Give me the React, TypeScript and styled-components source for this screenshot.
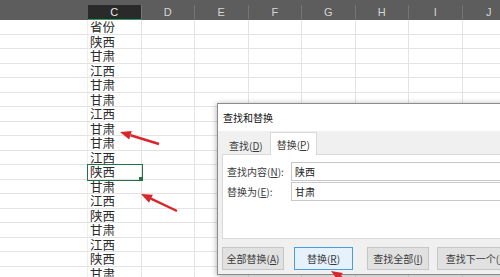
import React from 'react';
import styled, { createGlobalStyle } from 'styled-components';

const GlobalStyle = createGlobalStyle`
  html, body {
    margin: 0;
    padding: 0;
    background: #ffffff;
  }
  * {
    box-sizing: border-box;
  }
`;

const columns = ['', 'C', 'D', 'E', 'F', 'G', 'H', 'I', 'J'];
const provinces = [
  '省份', '陕西', '甘肃', '江西', '甘肃', '甘肃', '江西', '甘肃', '甘肃',
  '江西', '陕西', '甘肃', '江西', '陕西', '甘肃', '江西', '陕西', '甘肃',
];
const selectedRow = 10;

const buttons = [
  { label: '全部替换', key: 'A', width: 62, gap: 0, primary: false },
  { label: '替换', key: 'R', width: 59, gap: 10, primary: true },
  { label: '查找全部', key: 'I', width: 62, gap: 14, primary: false },
  { label: '查找下一个', key: 'F', width: 80, gap: 8, primary: false },
];

const App = () => {
  return (
    <Screen>
      <GlobalStyle />
      <Sheet>
        <HeaderBar>
          {columns.map((c, i) => (
            <HeaderCell key={i} $active={c === 'C'} $first={i === 0}>
              {c}
            </HeaderCell>
          ))}
        </HeaderBar>
        {provinces.map((p, r) => (
          <Row key={r}>
            {columns.map((c, i) => (
              <Cell key={i} $first={i === 0} $selected={c === 'C' && r === selectedRow}>
                {c === 'C' ? p : ''}
              </Cell>
            ))}
          </Row>
        ))}
      </Sheet>

      <Arrows viewBox="0 0 500 277" width="500" height="277">
        <Arrow x1={159} y1={144} x2={120} y2={132} />
        <Arrow x1={177} y1={211} x2={141} y2={194} />
        <Arrow x1={352} y1={284} x2={331} y2={271} />
      </Arrows>

      <Dialog>
        <TitleBar>查找和替换</TitleBar>
        <DialogBody>
          <TabRow>
            <Tab>
              查找(<u>D</u>)
            </Tab>
            <Tab $active>
              替换(<u>P</u>)
            </Tab>
          </TabRow>
          <Panel>
            <FieldRow>
              <FieldLabel>
                查找内容(<u>N</u>):
              </FieldLabel>
              <FieldInput>陕西</FieldInput>
            </FieldRow>
            <FieldRow>
              <FieldLabel>
                替换为(<u>E</u>):
              </FieldLabel>
              <FieldInput>甘肃</FieldInput>
            </FieldRow>
          </Panel>
          <ButtonRow>
            {buttons.map((b) => (
              <DialogButton key={b.key} $width={b.width} $gap={b.gap} $primary={b.primary}>
                {b.label}(<u>{b.key}</u>)
              </DialogButton>
            ))}
          </ButtonRow>
        </DialogBody>
      </Dialog>
    </Screen>
  );
};

const Arrow = ({ x1, y1, x2, y2 }: { x1: number; y1: number; x2: number; y2: number }) => {
  const a = Math.atan2(y2 - y1, x2 - x1);
  const len = 11;
  const half = 4.5;
  const bx = x2 - len * Math.cos(a);
  const by = y2 - len * Math.sin(a);
  const px = -Math.sin(a) * half;
  const py = Math.cos(a) * half;
  return (
    <g>
      <line x1={x1} y1={y1} x2={bx} y2={by} stroke="#d8262b" strokeWidth={2.4} />
      <polygon
        points={`${x2},${y2} ${bx + px},${by + py} ${bx - px},${by - py}`}
        fill="#d8262b"
      />
    </g>
  );
};

export default App;

const Screen = styled.div`
  position: relative;
  width: 500px;
  height: 277px;
  overflow: hidden;
  background: #ffffff;
`;

const Sheet = styled.div`
  display: flex;
  flex-direction: column;
  width: 520px;
`;

const HeaderBar = styled.div`
  display: grid;
  grid-template-columns: 88px repeat(8, 53.5px);
  height: 20px;
  padding-top: 5px;
  background: #5d5d5d;
`;

const HeaderCell = styled.div<{ $active?: boolean; $first?: boolean }>`
  height: 15px;
  line-height: 14px;
  text-align: center;
  font-family: 'Liberation Sans', Arial, sans-serif;
  font-size: 11px;
  color: ${(p) => (p.$active ? '#e8e8e8' : '#d6d6d6')};
  background: ${(p) => (p.$active ? '#2a2a2a' : 'transparent')};
  border-right: 1px solid ${(p) => (p.$first ? 'transparent' : '#767676')};
  border-bottom: ${(p) => (p.$active ? '1px solid #2e9a5d' : '1px solid transparent')};
`;

const Row = styled.div`
  display: grid;
  grid-template-columns: 88px repeat(8, 53.5px);
  height: 14.5px;
`;

const Cell = styled.div<{ $first?: boolean; $selected?: boolean }>`
  position: relative;
  height: 14.5px;
  padding-left: 2px;
  line-height: 14px;
  font-family: 'Noto Sans CJK SC', 'Noto Sans', sans-serif;
  font-size: 12.5px;
  color: #2a2a2a;
  white-space: nowrap;
  border-bottom: 1px solid #e3e3e3;
  border-right: 1px solid ${(p) => (p.$first ? '#eeeeee' : '#e3e3e3')};
  ${(p) =>
    p.$selected &&
    `
    z-index: 1;
    outline: 1.5px solid #217346;
    outline-offset: -0.5px;
    &::after {
      content: '';
      position: absolute;
      right: -2px;
      bottom: -2px;
      width: 4px;
      height: 4px;
      background: #217346;
    }
  `}
`;

const Arrows = styled.svg`
  position: absolute;
  left: 0;
  top: 0;
  z-index: 2;
  pointer-events: none;
`;

const Dialog = styled.div`
  position: absolute;
  left: 217px;
  top: 103px;
  width: 300px;
  height: 172px;
  display: flex;
  flex-direction: column;
  background: #f0f0f0;
  border: 1px solid #8c8c8c;
  box-shadow: 0 1px 6px rgba(0, 0, 0, 0.35);
  font-family: 'Noto Sans CJK SC', 'Noto Sans', sans-serif;
  font-size: 10px;
  color: #1e1e1e;
  z-index: 1;
`;

const TitleBar = styled.div`
  height: 27px;
  line-height: 27px;
  padding-left: 5px;
  background: #ffffff;
  color: #111111;
`;

const DialogBody = styled.div`
  display: flex;
  flex-direction: column;
  flex: 1;
  padding-left: 4px;
`;

const TabRow = styled.div`
  display: flex;
  align-items: flex-end;
  height: 23px;
`;

const Tab = styled.div<{ $active?: boolean }>`
  position: relative;
  height: ${(p) => (p.$active ? '23px' : '20px')};
  line-height: ${(p) => (p.$active ? '23px' : '22px')};
  padding: 0 6px;
  margin-bottom: ${(p) => (p.$active ? '-1px' : '0')};
  background: ${(p) => (p.$active ? '#ffffff' : 'transparent')};
  border: 1px solid ${(p) => (p.$active ? '#d9d9d9' : 'transparent')};
  border-bottom: none;
  z-index: 1;
  color: #3a3a3a;
`;

const Panel = styled.div`
  display: flex;
  flex-direction: column;
  gap: 1px;
  height: 85px;
  padding: 7px 4px;
  background: #ffffff;
  border: 1px solid #d9d9d9;
  border-right: none;
`;

const FieldRow = styled.div`
  display: flex;
  align-items: center;
  height: 19px;
`;

const FieldLabel = styled.div`
  width: 64px;
  color: #3a3a3a;
  white-space: nowrap;
`;

const FieldInput = styled.div`
  flex: 1;
  height: 19px;
  line-height: 17px;
  padding-left: 3px;
  border: 1px solid #c8c8c8;
  border-right: none;
  background: #ffffff;
  color: #222222;
`;

const ButtonRow = styled.div`
  display: flex;
  margin-top: 8px;
`;

const DialogButton = styled.div<{ $width: number; $gap: number; $primary?: boolean }>`
  width: ${(p) => p.$width}px;
  flex-shrink: 0;
  height: 23px;
  margin-left: ${(p) => p.$gap}px;
  line-height: 21px;
  text-align: center;
  white-space: nowrap;
  color: #3a3a3a;
  background: ${(p) => (p.$primary ? '#e5f1fb' : '#e1e1e1')};
  border: 1px solid ${(p) => (p.$primary ? '#4a9ee0' : '#c6c6c6')};
`;
